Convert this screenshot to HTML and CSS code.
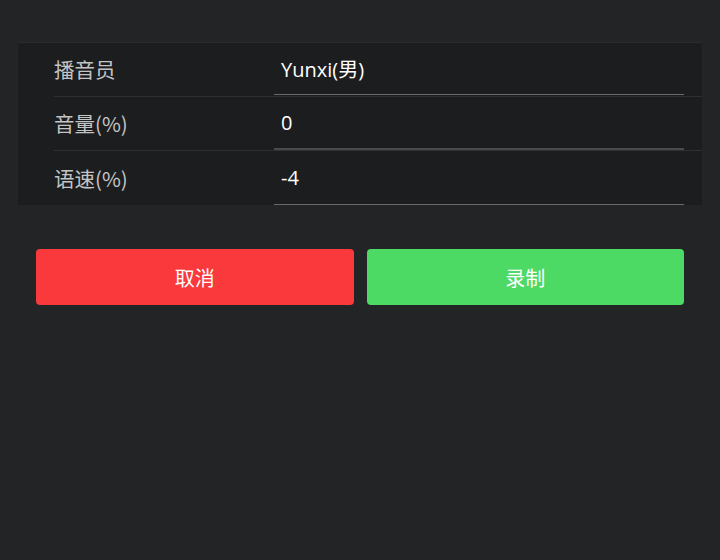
FILE: index.html
```html
<!DOCTYPE html>
<html lang="zh">
<head>
<meta charset="utf-8">
<link rel="stylesheet" href="styles.css">
</head>
<body>
<div class="page">
  <div class="panel">
    <div class="row">
      <div class="label">播音员</div>
      <div class="field"><span class="value">Yunxi(男)</span></div>
    </div>
    <div class="row">
      <div class="label">音量(%)</div>
      <div class="field field-dark"><span class="value">0</span></div>
    </div>
    <div class="row last">
      <div class="label">语速(%)</div>
      <div class="field"><span class="value">-4</span></div>
    </div>
  </div>
  <div class="actions">
    <button class="btn btn-cancel">取消</button>
    <button class="btn btn-record">录制</button>
  </div>
</div>
</body>
</html>
```

FILE: styles.css
```css
html, body {
  margin: 0;
  padding: 0;
  background: #232426;
  height: 100%;
}
body {
  font-family: "Open Sans", "Noto Sans CJK SC", sans-serif;
}
.page {
  padding-top: 42px;
}
.panel {
  margin: 0 18px;
  background: #1c1d1f;
  border-top: 1px solid #2b2c2e;
}
.row {
  display: flex;
  align-items: stretch;
  margin-left: 36px;
  height: 54px;
  box-sizing: border-box;
  border-bottom: 1px solid #2e2f31;
}
.row.last {
  border-bottom: none;
}
.label {
  width: 220px;
  display: flex;
  align-items: center;
  color: #c4c4c4;
  font-family: "Noto Sans CJK SC", sans-serif;
  font-size: 20.5px;
  padding-bottom: 1px;
}
.field {
  width: 410px;
  display: flex;
  align-items: center;
  border-bottom: 1px solid #6a6a6a;
  margin-bottom: 1px;
  padding-left: 7px;
  padding-bottom: 1px;
  box-sizing: border-box;
}
.field-dark {
  border-bottom: 2px solid #4a4a4a;
  margin-bottom: 0;
}
.row.last .field {
  margin-bottom: 0;
}
.value {
  color: #ffffff;
  font-size: 20px;
}
.actions {
  display: flex;
  gap: 13px;
  margin: 44px 36px 0;
}
.btn {
  flex: 1;
  height: 56px;
  border: none;
  border-radius: 4px;
  color: #ffffff;
  font-family: "Noto Sans CJK SC", sans-serif;
  font-size: 20px;
  padding: 0;
}
.btn-cancel {
  background: #f9393b;
}
.btn-record {
  background: #4cd964;
}
```
